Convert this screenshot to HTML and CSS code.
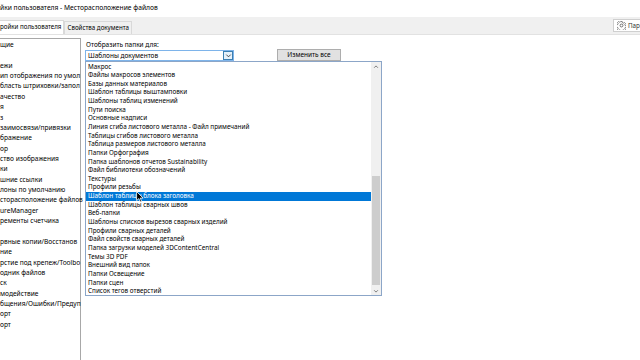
FILE: index.html
```html
<!DOCTYPE html>
<html lang="ru">
<head>
<meta charset="utf-8">
<title>Месторасположение файлов</title>
<link rel="stylesheet" href="styles.css">
</head>
<body>
<div class="title">йки пользователя - Месторасположение файлов</div>
<div class="tabs">
  <div class="tab active">ройки пользователя</div>
  <div class="tab">Свойства документа</div>
  <div class="opts">
    <svg class="gear" viewBox="0 0 10 10" width="9" height="9">
      <circle cx="5" cy="5" r="1.6" fill="none" stroke="#555" stroke-width="0.9"/>
      <path d="M4.2 0.6h1.6l0.3 1.3 1.1 0.5 1.1-0.7 1.1 1.1-0.7 1.1 0.5 1.1 1.3 0.3v1.6l-1.3 0.3-0.5 1.1 0.7 1.1-1.1 1.1-1.1-0.7-1.1 0.5-0.3 1.3H4.2l-0.3-1.3-1.1-0.5-1.1 0.7-1.1-1.1 0.7-1.1-0.5-1.1-1.3-0.3V4.2l1.3-0.3 0.5-1.1-0.7-1.1 1.1-1.1 1.1 0.7 1.1-0.5z" fill="none" stroke="#555" stroke-width="0.8" stroke-linejoin="round"/>
    </svg>
    <span>Пара</span>
  </div>
</div>
<div class="content">
  <ul class="tree">
    <li>щие</li>
    <li></li>
    <li>ежи</li>
    <li>ип отображения по умол</li>
    <li>бласть штриховки/запол</li>
    <li>ачество</li>
    <li>я</li>
    <li>з</li>
    <li>заимосвязи/привязки</li>
    <li>бражение</li>
    <li>ор</li>
    <li>ство изображения</li>
    <li>ки</li>
    <li>шние ссылки</li>
    <li>лоны по умолчанию</li>
    <li>сторасположение файлов</li>
    <li>ureManager</li>
    <li>ременты счетчика</li>
    <li></li>
    <li>рвные копии/Восстанов</li>
    <li>ние</li>
    <li>рстие под крепеж/Toolbo</li>
    <li>одник файлов</li>
    <li>ск</li>
    <li>модействие</li>
    <li>бщения/Ошибки/Предуп</li>
    <li>орт</li>
    <li>орт</li>
  </ul>
  <div class="pane">
    <div class="label">Отобразить папки для:</div>
    <div class="row">
      <div class="combo">
        <span class="combo-text">Шаблоны документов</span>
        <span class="combo-arrow">
          <svg viewBox="0 0 8 8" width="7" height="7"><polyline points="1.5,3 4,5.5 6.5,3" fill="none" stroke="#333" stroke-width="1"/></svg>
        </span>
        <div class="dropdown">
          <ul class="list">
            <li>Макрос</li>
            <li>Файлы макросов элементов</li>
            <li>Базы данных материалов</li>
            <li>Шаблон таблицы выштамповки</li>
            <li>Шаблоны таблиц изменений</li>
            <li>Пути поиска</li>
            <li>Основные надписи</li>
            <li>Линия сгиба листового металла - Файл примечаний</li>
            <li>Таблицы сгибов листового металла</li>
            <li>Таблица размеров листового металла</li>
            <li>Папки Орфография</li>
            <li>Папка шаблонов отчетов Sustainability</li>
            <li>Файл библиотеки обозначений</li>
            <li>Текстуры</li>
            <li>Профили резьбы</li>
            <li class="sel">Шаблон таблицы блока заголовка</li>
            <li>Шаблон таблицы сварных швов</li>
            <li>Веб-папки</li>
            <li>Шаблоны списков вырезов сварных изделий</li>
            <li>Профили сварных деталей</li>
            <li>Файл свойств сварных деталей</li>
            <li>Папка загрузки моделей 3DContentCentral</li>
            <li>Темы 3D PDF</li>
            <li>Внешний вид папок</li>
            <li>Папки Освещение</li>
            <li>Папки сцен</li>
            <li>Список тегов отверстий</li>
          </ul>
          <div class="scrollbar">
            <div class="sb-btn"><svg viewBox="0 0 8 8" width="6" height="6"><polyline points="1.5,5 4,2.5 6.5,5" fill="none" stroke="#555" stroke-width="1"/></svg></div>
            <div class="track"><div class="thumb"></div></div>
            <div class="sb-btn"><svg viewBox="0 0 8 8" width="6" height="6"><polyline points="1.5,3 4,5.5 6.5,3" fill="none" stroke="#555" stroke-width="1"/></svg></div>
          </div>
          <svg class="cursor" viewBox="0 0 8 12" width="8" height="12"><path d="M0.6,0.6 L0.6,9.6 L2.8,7.6 L4.3,10.9 L5.7,10.3 L4.2,7.1 L7.1,7.1 Z" fill="#000" stroke="#fff" stroke-width="0.8" stroke-linejoin="round"/></svg>
        </div>
      </div>
      <button class="btn">Изменить все</button>
    </div>
  </div>
</div>
</body>
</html>
```
FILE: styles.css
```css
* { box-sizing: border-box; }
html, body { margin: 0; padding: 0; }
body {
  width: 640px;
  height: 360px;
  overflow: hidden;
  background: #fff;
  font-family: "Noto Sans", "DejaVu Sans", sans-serif;
  font-size: 6.6px;
  color: #000;
}
.title {
  height: 17px;
  line-height: 16px;
  font-size: 6.7px;
  white-space: nowrap;
}
.tabs {
  height: 18px;
  background: #f0f0f0;
  border-bottom: 1px solid #e2e2e2;
  display: flex;
  align-items: flex-end;
}
.tab {
  height: 13px;
  line-height: 12px;
  padding: 0 2px;
  font-size: 6.2px;
  white-space: nowrap;
  border: 1px solid #d9d9d9;
  border-bottom: none;
  background: #f0f0f0;
}
.tab.active {
  height: 14px;
  padding: 0 2px 0 0;
  background: #fff;
  border-left: none;
}
.opts {
  margin-left: auto;
  align-self: center;
  height: 13px;
  padding-left: 3px;
  display: flex;
  align-items: center;
  gap: 2px;
  background: #fff;
  border: 1px solid #cfcfcf;
  border-right: none;
  white-space: nowrap;
  width: 27px;
  font-size: 6.3px;
  color: #333;
}
.gear { flex: none; }
.content {
  display: flex;
  margin-top: 3px;
  height: 322px;
}
.tree {
  list-style: none;
  margin: 0;
  padding: 1px 0 0 0;
  width: 81px;
  flex: none;
  border-top: 1px solid #a8a8a8;
  border-right: 1px solid #a8a8a8;
}
.tree li {
  height: 10.37px;
  line-height: 10.37px;
  font-size: 6.6px;
  white-space: nowrap;
}
.pane {
  flex: 1;
  padding-left: 4px;
}
.label {
  margin-top: 2px;
  height: 9px;
  line-height: 9px;
  padding-left: 1px;
  font-size: 6.5px;
}
.row {
  display: flex;
  align-items: flex-start;
  margin-top: 1px;
}
.combo {
  position: relative;
  width: 149px;
  height: 11px;
  border: 1px solid #7eb4ea;
  background: #fff;
  display: flex;
  align-items: center;
}
.combo-text {
  flex: 1;
  padding-left: 2px;
  line-height: 9px;
  white-space: nowrap;
  font-size: 6.5px;
}
.combo-arrow {
  width: 10px;
  height: 9px;
  background: #e5f1fb;
  border: 1px solid #3c7fb1;
  display: flex;
  align-items: center;
  justify-content: center;
}
.btn {
  margin: -1px 0 0 43px;
  width: 64px;
  height: 12px;
  padding: 0;
  font-family: inherit;
  font-size: 6.5px;
  line-height: 10px;
  color: #000;
  background: #e1e1e1;
  border: 1px solid #adadad;
}
.dropdown {
  position: absolute;
  left: -1px;
  top: 10px;
  width: 297px;
  height: 235px;
  background: #fff;
  border: 1px solid #8ca6c8;
  display: flex;
  z-index: 2;
}
.list {
  list-style: none;
  margin: 0;
  padding: 0.5px 0 0 0;
  flex: 1;
  overflow: hidden;
}
.list li {
  height: 8.65px;
  line-height: 8.65px;
  padding-left: 2px;
  white-space: nowrap;
  font-size: 6.35px;
}
.list li.sel {
  background: #0078d7;
  color: #fff;
}
.scrollbar {
  width: 10px;
  flex: none;
  background: #f0f0f0;
  display: flex;
  flex-direction: column;
}
.sb-btn {
  height: 9px;
  display: flex;
  align-items: center;
  justify-content: center;
}
.track {
  flex: 1;
  display: flex;
  flex-direction: column;
  justify-content: flex-end;
  align-items: center;
  padding-bottom: 1px;
}
.thumb {
  width: 8px;
  height: 109px;
  background: #cdcdcd;
}
.cursor {
  position: absolute;
  left: 50px;
  top: 129px;
}
```
